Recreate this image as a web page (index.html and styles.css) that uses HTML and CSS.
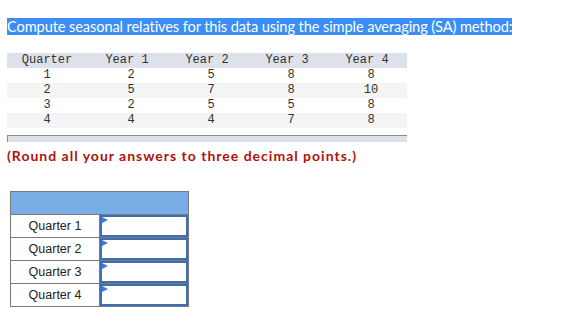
FILE: index.html
```html
<!DOCTYPE html>
<html>
<head>
<meta charset="utf-8">
<link rel="stylesheet" href="styles.css">
</head>
<body>
<div class="page">
  <p class="title"><span class="hl">Compute seasonal relatives for this data using the simple averaging (SA) method:</span></p>
  <table class="data">
    <thead>
      <tr><th>Quarter</th><th>Year 1</th><th>Year 2</th><th>Year 3</th><th>Year 4</th></tr>
    </thead>
    <tbody>
      <tr><td>1</td><td class="n">2</td><td class="n">5</td><td class="n">8</td><td class="n">8</td></tr>
      <tr><td>2</td><td class="n">5</td><td class="n">7</td><td class="n">8</td><td class="n">10</td></tr>
      <tr><td>3</td><td class="n">2</td><td class="n">5</td><td class="n">5</td><td class="n">8</td></tr>
      <tr><td>4</td><td class="n">4</td><td class="n">4</td><td class="n">7</td><td class="n">8</td></tr>
    </tbody>
  </table>
  <div class="tablefoot"></div>
  <p class="note">(Round all your answers to three decimal points.)</p>
  <table class="answers">
    <tr class="head"><td colspan="2"></td></tr>
    <tr><td class="lbl">Quarter 1</td><td class="inp"><div class="box"><span class="flag"></span></div></td></tr>
    <tr><td class="lbl">Quarter 2</td><td class="inp"><div class="box"><span class="flag"></span></div></td></tr>
    <tr><td class="lbl">Quarter 3</td><td class="inp"><div class="box"><span class="flag"></span></div></td></tr>
    <tr><td class="lbl">Quarter 4</td><td class="inp"><div class="box"><span class="flag"></span></div></td></tr>
  </table>
</div>
</body>
</html>
```
FILE: styles.css
```css
html, body { margin: 0; padding: 0; background: #fff; }
.page { padding: 18px 0 0 7px; }
.title { margin: 0; font-family: "Lato", "Liberation Sans", sans-serif; font-size: 14.6px; letter-spacing: -0.1px; line-height: 17px; }
.hl { background: #3a8ef6; color: #fff; }
.data { margin-top: 18px; border-collapse: collapse; width: 400px; font-family: "Liberation Mono", monospace; font-size: 12px; color: #333; }
.data th { background: #dde1ea; font-weight: normal; height: 15px; padding: 0; line-height: 15px; width: 80px; }
.data td { height: 15px; padding: 0; line-height: 15px; text-align: center; }
.data td.n { padding-left: 8px; }
.data tbody tr:nth-child(even) td { background: #f4f4f4; }
.tablefoot { margin-top: 7px; width: 399px; height: 6px; background: #dde1ea; border-top: 1px solid #8a8a8a; border-left: 1px solid #8a8a8a; }
.note { margin: 5px 0 0 0; font-family: "Lato", "Liberation Sans", sans-serif; font-weight: bold; font-size: 14px; letter-spacing: 1px; color: #b0120a; line-height: 17px; }
.answers { margin: 27px 0 0 3px; border-collapse: collapse; width: 179px; font-family: "Liberation Sans", Arial, sans-serif; font-size: 12.5px; color: #222; }
.answers td { border: 1px solid #7a7a7a; padding: 0; height: 22px; }
.answers .head td { background: #78ade6; }
.answers .lbl { width: 88px; text-align: center; }
.answers .inp { width: 88px; }
.box { position: relative; height: 18px; border: 2px solid #3d6db3; }
.flag { position: absolute; left: 0; top: 0; width: 0; height: 0; border-top: 3px solid transparent; border-bottom: 3px solid transparent; border-left: 6px solid #3d7bd0; }
```
